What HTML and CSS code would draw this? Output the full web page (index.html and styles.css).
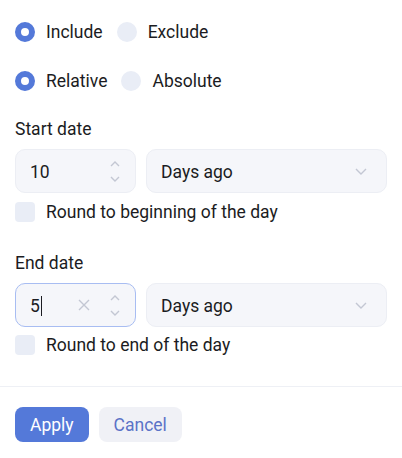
FILE: index.html
```html
<!DOCTYPE html>
<html lang="en">
<head>
  <meta charset="UTF-8" />
  <meta name="viewport" content="width=device-width, initial-scale=1" />
  <title>Date filter</title>
  <link rel="stylesheet" href="styles.css">
</head>
<body>
  <div class="panel">
    <div class="radio-row first">
      <label class="radio"><span class="dot checked"></span>Include</label>
      <label class="radio"><span class="dot"></span>Exclude</label>
    </div>
    <div class="radio-row">
      <label class="radio"><span class="dot checked"></span>Relative</label>
      <label class="radio"><span class="dot"></span>Absolute</label>
    </div>

    <div class="field-label">Start date</div>
    <div class="inputs">
      <div class="number">
        <span class="value">10</span>
        <span class="spin">
          <svg width="10" height="6" viewBox="0 0 10 6"><path d="M1 5 L5 1 L9 5" /></svg>
          <svg width="10" height="6" viewBox="0 0 10 6"><path d="M1 1 L5 5 L9 1" /></svg>
        </span>
      </div>
      <div class="select">
        <span>Days ago</span>
        <svg width="12" height="7" viewBox="0 0 12 7"><path d="M1 1 L6 6 L11 1" /></svg>
      </div>
    </div>
    <label class="check"><span class="box"></span>Round to beginning of the day</label>

    <div class="field-label end">End date</div>
    <div class="inputs">
      <div class="number focused">
        <span class="value">5<span class="caret"></span></span>
        <svg class="clear" width="12" height="12" viewBox="0 0 12 12"><path d="M1 1 L11 11 M11 1 L1 11" /></svg>
        <span class="spin">
          <svg width="10" height="6" viewBox="0 0 10 6"><path d="M1 5 L5 1 L9 5" /></svg>
          <svg width="10" height="6" viewBox="0 0 10 6"><path d="M1 1 L5 5 L9 1" /></svg>
        </span>
      </div>
      <div class="select">
        <span>Days ago</span>
        <svg width="12" height="7" viewBox="0 0 12 7"><path d="M1 1 L6 6 L11 1" /></svg>
      </div>
    </div>
    <label class="check last"><span class="box"></span>Round to end of the day</label>
  </div>

  <div class="footer">
    <button class="btn primary">Apply</button>
    <button class="btn secondary">Cancel</button>
  </div>
</body>
</html>
```

FILE: styles.css
```css
body {
  margin: 0;
  font-family: Roboto, "Liberation Sans", sans-serif;
  font-size: 17.5px;
  color: #1b1c22;
  background: #fff;
}
.panel {
  padding: 0 15px;
}
.radio-row {
  display: flex;
  align-items: center;
  height: 20px;
  margin-top: 29px;
}
.radio-row.first {
  margin-top: 22px;
}
.radio {
  display: flex;
  align-items: center;
  margin-right: 14px;
  line-height: 20px;
}
.dot {
  width: 20px;
  height: 20px;
  box-sizing: border-box;
  border-radius: 50%;
  background: #e9edf6;
  margin-right: 11px;
}
.dot.checked {
  background: #fff;
  border: 6px solid #5479d9;
}
.field-label {
  margin-top: 28px;
  line-height: 20px;
}
.field-label.end {
  margin-top: 31px;
}
.inputs {
  display: flex;
  gap: 10px;
  margin-top: 10px;
}
.number, .select {
  height: 44px;
  box-sizing: border-box;
  background: #f5f6fa;
  border: 1px solid #eceef4;
  border-radius: 10px;
  display: flex;
  align-items: center;
  padding-top: 2px;
}
.number {
  width: 121px;
  padding-left: 14px;
  padding-right: 15px;
}
.number.focused {
  border-color: #a8bdf2;
}
.number .value {
  flex: 1;
  display: flex;
  align-items: center;
}
.caret {
  display: inline-block;
  width: 1px;
  height: 20px;
  background: #1b1c22;
  margin-left: 1px;
}
.clear {
  margin-right: 20px;
  margin-top: -2px;
}
.clear path {
  stroke: #c3c7d3;
  stroke-width: 1.4;
  fill: none;
}
.spin {
  display: flex;
  flex-direction: column;
  gap: 9px;
  margin-top: -2px;
}
.spin path, .select path {
  stroke: #c3c7d3;
  stroke-width: 1.4;
  fill: none;
}
.select {
  flex: 1;
  padding-left: 14px;
  padding-right: 19px;
  justify-content: space-between;
}
.select svg {
  margin-top: -2px;
}
.check {
  display: flex;
  align-items: center;
  margin-top: 9px;
  line-height: 20px;
}
.check.last {
  margin-top: 8px;
}
.check .box {
  width: 20px;
  height: 20px;
  border-radius: 4px;
  background: #e9edf6;
  margin-right: 11px;
}
.footer {
  margin-top: 31px;
  border-top: 1px solid #eef0f5;
  padding: 20px 15px 0;
  display: flex;
  gap: 10px;
}
.btn {
  font-family: Roboto, "Liberation Sans", sans-serif;
  font-size: 17.5px;
  height: 35px;
  padding: 0 15px;
  border: none;
  border-radius: 8px;
  cursor: pointer;
}
.primary {
  background: #5479d9;
  color: #fff;
}
.secondary {
  background: #f0f1f6;
  color: #5b73c7;
}
```
